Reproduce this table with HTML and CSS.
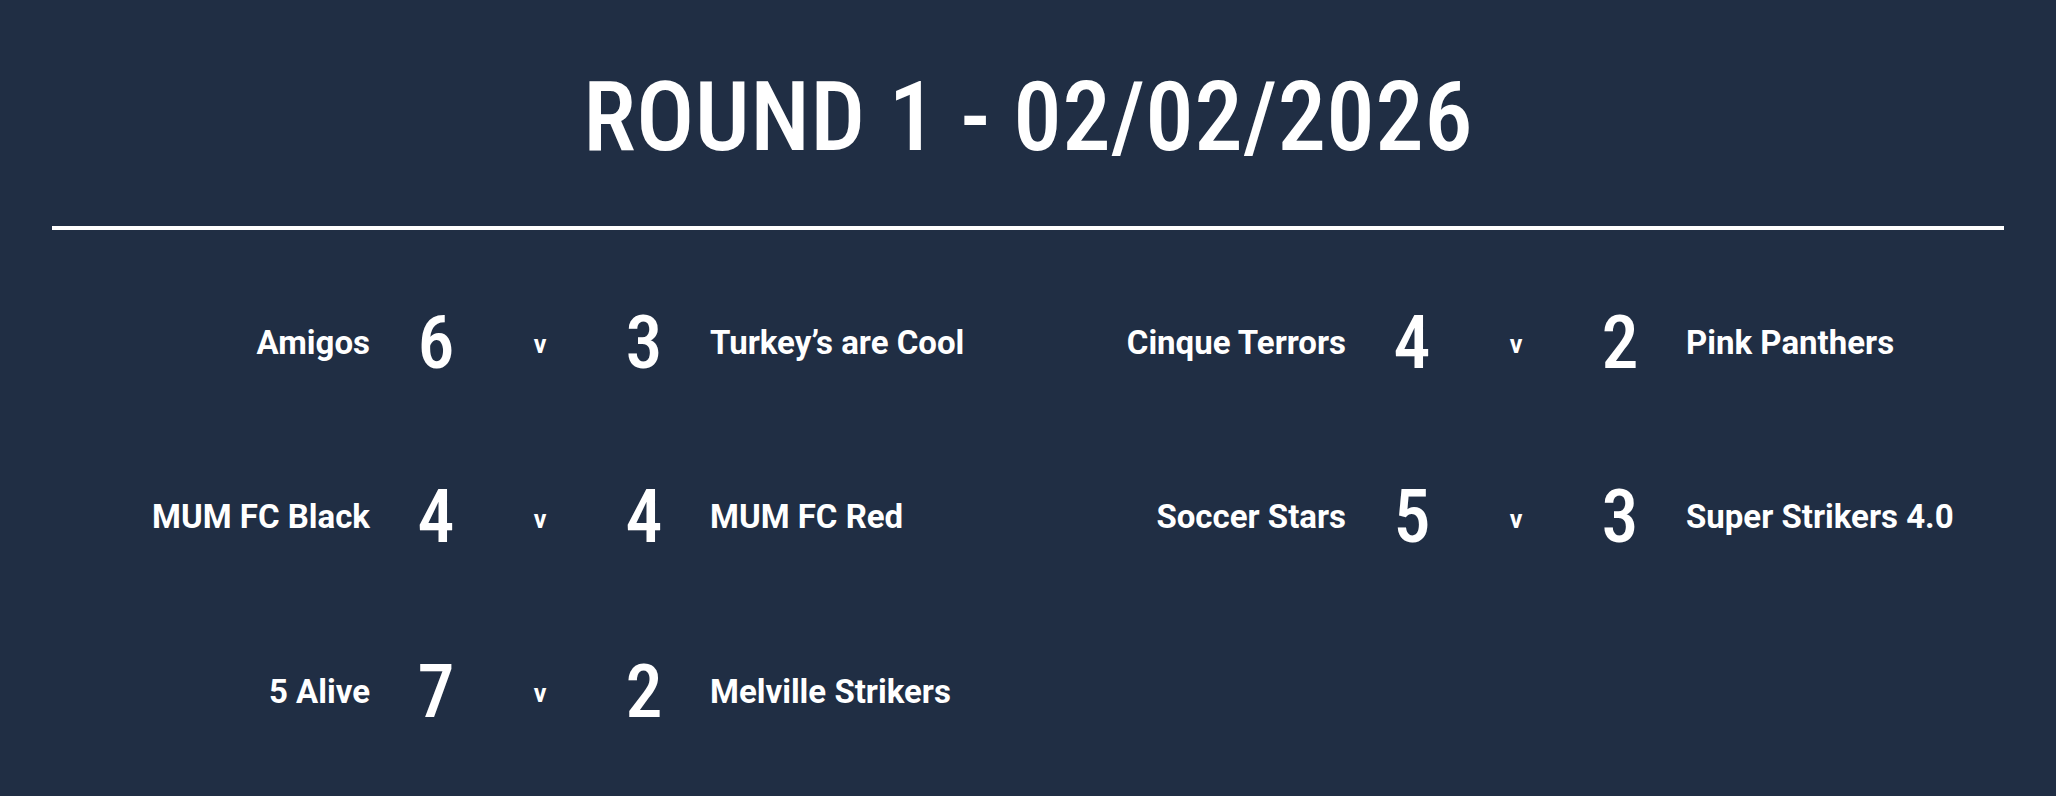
FILE: index.html
```html
<!DOCTYPE html>
<html lang="en">
<head>
<meta charset="utf-8">
<title>Round 1 - 02/02/2026</title>
<link rel="stylesheet" href="styles.css">
</head>
<body>
<main class="page">
  <header class="header">
    <h1 class="title">ROUND 1 - 02/02/2026</h1>
  </header>
  <hr class="rule">
  <section class="fixtures">
    <div class="match">
      <span class="team home">Amigos</span>
      <span class="score">6</span>
      <span class="vs">v</span>
      <span class="score">3</span>
      <span class="team away">Turkey’s are Cool</span>
    </div>
    <div class="match">
      <span class="team home">Cinque Terrors</span>
      <span class="score">4</span>
      <span class="vs">v</span>
      <span class="score">2</span>
      <span class="team away">Pink Panthers</span>
    </div>
    <div class="match">
      <span class="team home">MUM FC Black</span>
      <span class="score">4</span>
      <span class="vs">v</span>
      <span class="score">4</span>
      <span class="team away">MUM FC Red</span>
    </div>
    <div class="match">
      <span class="team home">Soccer Stars</span>
      <span class="score">5</span>
      <span class="vs">v</span>
      <span class="score">3</span>
      <span class="team away">Super Strikers 4.0</span>
    </div>
    <div class="match">
      <span class="team home">5 Alive</span>
      <span class="score">7</span>
      <span class="vs">v</span>
      <span class="score">2</span>
      <span class="team away">Melville Strikers</span>
    </div>
  </section>
</main>
</body>
</html>
```
FILE: styles.css
```css
html, body {
  margin: 0;
  padding: 0;
  background: #202e44;
}

body {
  color: #ffffff;
  font-family: "Roboto", "Liberation Sans", sans-serif;
  min-height: 796px;
}

.page {
  padding: 0 52px;
}

.header {
  padding-top: 69px;
  text-align: center;
}

.title {
  margin: 0;
  font-family: "Roboto Condensed", "Roboto", sans-serif;
  font-size: 97px;
  line-height: 1;
  font-weight: 500;
  letter-spacing: 0.4px;
}

.rule {
  margin: 60px 0 0;
  border: 0;
  height: 4px;
  background: #ffffff;
}

.fixtures {
  margin-top: 25px;
  display: grid;
  grid-template-columns: 1fr 1fr;
  grid-auto-rows: 174.5px;
}

.match {
  display: grid;
  grid-template-columns: 1fr 68px 76px 68px 1fr;
  column-gap: 32px;
  align-items: center;
}

.team {
  font-size: 33px;
  font-weight: 700;
  white-space: nowrap;
}

.home {
  text-align: right;
}

.away {
  text-align: left;
}

.score {
  font-family: "Roboto Condensed", "Roboto", sans-serif;
  font-size: 74px;
  font-weight: 500;
  text-align: center;
}

.vs {
  font-size: 25px;
  font-weight: 700;
  text-align: center;
  padding-top: 5px;
}
```
